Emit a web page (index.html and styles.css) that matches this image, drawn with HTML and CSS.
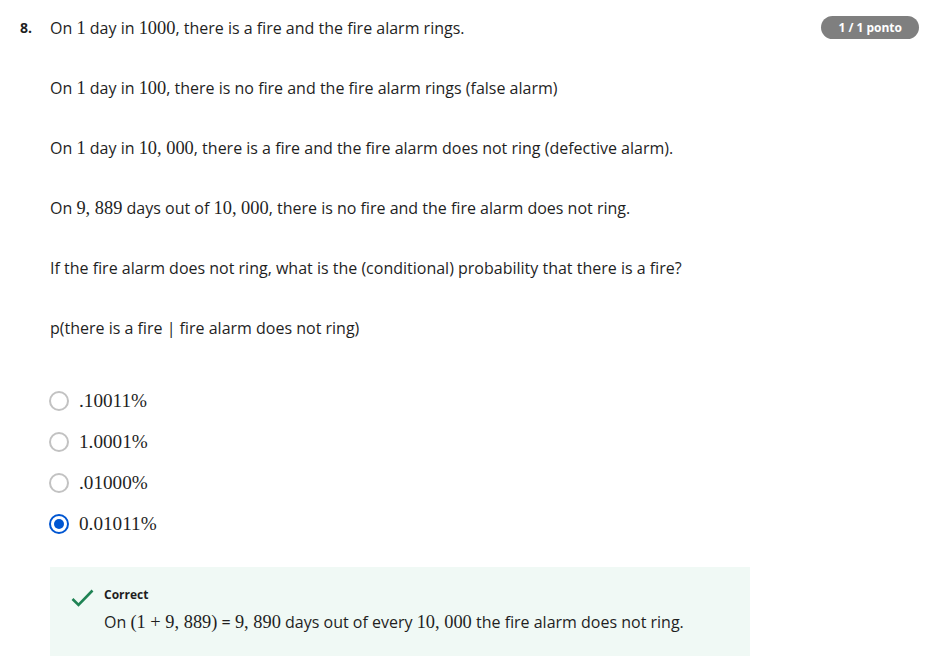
FILE: index.html
```html
<!DOCTYPE html>
<html>
<head>
<meta charset="utf-8">
<link rel="stylesheet" href="styles.css">
</head>
<body>
<div class="question">
  <div class="qnum">8.</div>
  <div class="qbody">
    <div class="prompt">
      <p>On <span class="m">1</span> day in <span class="m">1000</span>, there is a fire and the fire alarm rings.</p>
      <p>On <span class="m">1</span> day in <span class="m">100</span>, there is no fire and the fire alarm rings (false alarm)</p>
      <p>On <span class="m">1</span> day in <span class="m">10, 000</span>, there is a fire and the fire alarm does not ring (defective alarm).</p>
      <p>On <span class="m">9, 889</span> days out of <span class="m">10, 000</span>, there is no fire and the fire alarm does not ring.</p>
      <p>If the fire alarm does not ring, what is the (conditional) probability that there is a fire?</p>
      <p>p(there is a fire | fire alarm does not ring)</p>
    </div>
    <div class="options">
      <label class="option"><span class="radio"></span><span class="m mo">.10011%</span></label>
      <label class="option"><span class="radio"></span><span class="m mo">1.0001%</span></label>
      <label class="option"><span class="radio"></span><span class="m mo">.01000%</span></label>
      <label class="option"><span class="radio checked"></span><span class="m mo">0.01011%</span></label>
    </div>
    <div class="feedback">
      <svg class="check" width="24" height="24" viewBox="0 0 24 24"><path d="M2.5 13 L8.5 19 L22.5 4.5" fill="none" stroke="#1f8354" stroke-width="2.6"/></svg>
      <div class="fb-text">
        <div class="fb-title">Correct</div>
        <div class="fb-body">On <span class="m">(1 + 9, 889)</span> = <span class="m">9, 890</span> days out of every <span class="m">10, 000</span> the fire alarm does not ring.</div>
      </div>
    </div>
  </div>
  <div class="badge">1 / 1 ponto</div>
</div>
</body>
</html>
```
FILE: styles.css
```css
html, body {
  margin: 0;
  padding: 0;
  background: #ffffff;
}
body {
  font-family: "Open Sans", "Liberation Sans", sans-serif;
  color: #1f1f1f;
  font-size: 16px;
}
.question {
  display: flex;
  align-items: flex-start;
  padding: 16px 18px 0 20px;
}
.qnum {
  width: 30px;
  flex: none;
  font-size: 14px;
  font-weight: 700;
  line-height: 24px;
}
.qbody {
  flex: 1;
}
.prompt p {
  margin: 0 0 36px 0;
  line-height: 24px;
}
.prompt p:last-child {
  margin-bottom: 0;
}
.m {
  font-family: "Liberation Serif", "DejaVu Serif", serif;
  font-size: 1.15em;
}
.mo {
  font-size: 1.2em;
}
.options {
  display: flex;
  flex-direction: column;
  gap: 17px;
  margin-top: 49px;
}
.option {
  display: flex;
  align-items: center;
  gap: 10px;
  line-height: 24px;
}
.radio {
  width: 16px;
  height: 16px;
  border: 2px solid #c2c2c2;
  border-radius: 50%;
  flex: none;
  box-sizing: content-box;
  position: relative;
  margin-left: -1px;
}
.radio.checked {
  border-color: #0056d2;
}
.radio.checked::after {
  content: "";
  position: absolute;
  left: 3px;
  top: 3px;
  width: 10px;
  height: 10px;
  border-radius: 50%;
  background: #0056d2;
}
.feedback {
  margin-top: 31px;
  width: 700px;
  background: #f0f9f5;
  display: flex;
  gap: 10px;
  padding: 18px 20px 30px 20px;
  box-sizing: border-box;
}
.check {
  flex: none;
  margin-top: 1px;
}
.fb-title {
  font-size: 12px;
  font-weight: 700;
  line-height: 20px;
}
.fb-body {
  line-height: 24px;
  margin-top: 5px;
}
.badge {
  flex: none;
  background: #7f7f7f;
  color: #ffffff;
  font-size: 12px;
  font-weight: 700;
  border-radius: 12px;
  padding: 0 17px;
  line-height: 23px;
  margin-left: 20px;
}
```
